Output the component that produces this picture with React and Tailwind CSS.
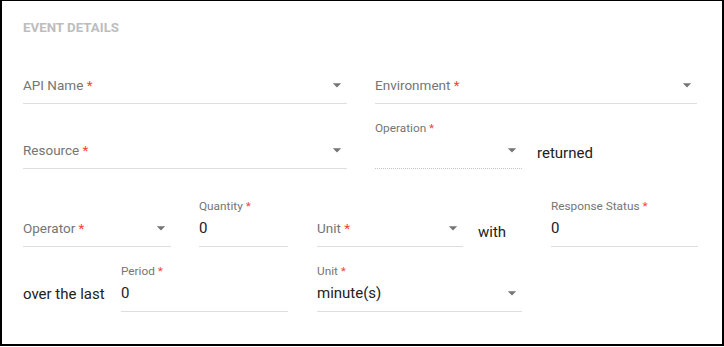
import React from 'react';

function Arrow() {
  return (
    <svg viewBox="0 0 24 24" className="w-5 h-5 shrink-0 fill-[#757575]">
      <path d="M7 10l5 5 5-5z" />
    </svg>
  );
}

function Label({ text, small }) {
  return (
    <span className={small ? 'text-[11.8px] text-[#757575]' : 'text-[13.5px] text-[#757575]'}>
      {text}
      <span className="text-[#f44336]">{' *'}</span>
    </span>
  );
}

function Field({ label, value, select, dotted, className }) {
  const shrink = value !== undefined || dotted;
  return (
    <div className={'flex flex-col h-12 ' + className}>
      <div className="h-[14px] leading-[11px]">{shrink && <Label text={label} small />}</div>
      <div
        className={
          'flex items-center h-[34px] pb-[3px] border-b ' +
          (dotted ? 'border-dotted border-[#c4c4c4]' : 'border-[#dedede]')
        }
      >
        <div className="flex-1 text-[15px] text-[#212121] leading-5">
          {shrink ? value : <Label text={label} />}
        </div>
        {select && <Arrow />}
      </div>
    </div>
  );
}

function Text({ children, className }) {
  return <div className={'text-[15px] leading-5 text-[#212121] ' + className}>{children}</div>;
}

export default function App() {
  return (
    <div
      className="w-[724px] h-[346px] bg-white border-t border-l-2 border-r-2 border-b-2 border-black pl-[21px] pt-[19px]"
      style={{ fontFamily: 'Roboto, "Liberation Sans", sans-serif' }}
    >
      <div className="text-[13.3px] leading-4 font-bold text-[#bdbdbd] uppercase">Event Details</div>

      <div className="flex items-end mt-[20px]">
        <Field label="API Name" select className="w-[324px]" />
        <Field label="Environment" select className="w-[322px] ml-[28px]" />
      </div>

      <div className="flex items-end mt-[17px]">
        <Field label="Resource" select className="w-[324px]" />
        <Field label="Operation" select dotted className="w-[147px] ml-[28px]" />
        <Text className="ml-[15px] pb-[6px]">returned</Text>
      </div>

      <div className="flex items-end mt-[30px]">
        <Field label="Operator" select className="w-[148px]" />
        <Field label="Quantity" value="0" className="w-[89px] ml-[28px]" />
        <Field label="Unit" select className="w-[146px] ml-[29px]" />
        <Text className="w-[88px] pl-[15px] pb-[5px]">with</Text>
        <Field label="Response Status" value="0" className="w-[147px]" />
      </div>

      <div className="flex items-end mt-[17px]">
        <Text className="w-[98px] pb-[8px]">over the last</Text>
        <Field label="Period" value="0" className="w-[167px]" />
        <Field label="Unit" value="minute(s)" select className="w-[205px] ml-[29px]" />
      </div>
    </div>
  );
}
